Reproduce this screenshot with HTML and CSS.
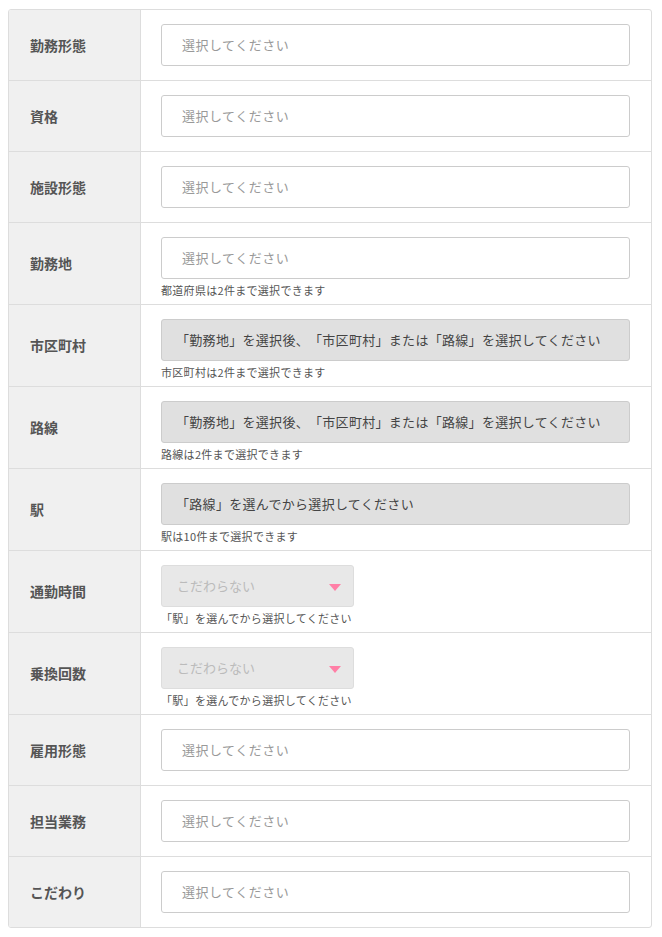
FILE: index.html
```html
<!DOCTYPE html>
<html lang="ja">
<head>
<meta charset="utf-8">
<title>検索条件</title>
<link rel="stylesheet" href="styles.css">
</head>
<body>
<div class="form-table">
  <div class="row">
    <div class="label">勤務形態</div>
    <div class="field"><div class="input">選択してください</div></div>
  </div>
  <div class="row">
    <div class="label">資格</div>
    <div class="field"><div class="input">選択してください</div></div>
  </div>
  <div class="row">
    <div class="label">施設形態</div>
    <div class="field"><div class="input">選択してください</div></div>
  </div>
  <div class="row">
    <div class="label">勤務地</div>
    <div class="field"><div class="input">選択してください</div><p class="note">都道府県は2件まで選択できます</p></div>
  </div>
  <div class="row">
    <div class="label">市区町村</div>
    <div class="field"><div class="input disabled">「勤務地」を選択後、「市区町村」または「路線」を選択してください</div><p class="note">市区町村は2件まで選択できます</p></div>
  </div>
  <div class="row">
    <div class="label">路線</div>
    <div class="field"><div class="input disabled">「勤務地」を選択後、「市区町村」または「路線」を選択してください</div><p class="note">路線は2件まで選択できます</p></div>
  </div>
  <div class="row">
    <div class="label">駅</div>
    <div class="field"><div class="input disabled">「路線」を選んでから選択してください</div><p class="note">駅は10件まで選択できます</p></div>
  </div>
  <div class="row">
    <div class="label">通勤時間</div>
    <div class="field"><div class="select">こだわらない<span class="arrow"></span></div><p class="note">「駅」を選んでから選択してください</p></div>
  </div>
  <div class="row">
    <div class="label">乗換回数</div>
    <div class="field"><div class="select">こだわらない<span class="arrow"></span></div><p class="note">「駅」を選んでから選択してください</p></div>
  </div>
  <div class="row">
    <div class="label">雇用形態</div>
    <div class="field"><div class="input">選択してください</div></div>
  </div>
  <div class="row">
    <div class="label">担当業務</div>
    <div class="field"><div class="input">選択してください</div></div>
  </div>
  <div class="row">
    <div class="label">こだわり</div>
    <div class="field"><div class="input">選択してください</div></div>
  </div>
</div>
</body>
</html>
```

FILE: styles.css
```css
html, body {
  margin: 0;
  padding: 0;
  background: #fff;
}
body {
  padding: 9px 10px 10px 8px;
  font-family: "Noto Sans CJK JP", "Noto Sans", sans-serif;
  color: #555;
  text-spacing-trim: space-all;
}
.form-table {
  width: 644px;
  box-sizing: border-box;
  border: 1px solid #ddd;
  border-radius: 3px;
  overflow: hidden;
}
.row {
  display: grid;
  grid-template-columns: 132px 1fr;
  border-top: 1px solid #ddd;
}
.row:first-child {
  border-top: none;
}
.label {
  background: #f0f0f0;
  border-right: 1px solid #ddd;
  display: flex;
  align-items: center;
  padding: 0 0 1px 21px;
  font-size: 14px;
  font-weight: bold;
  color: #555;
}
.field {
  padding: 14px 21px 14px 20px;
}
.input {
  box-sizing: border-box;
  height: 42px;
  border: 1px solid #ccc;
  border-radius: 3px;
  background: #fff;
  display: flex;
  align-items: center;
  padding: 0 0 1px 20px;
  font-size: 13px;
  letter-spacing: 0.5px;
  color: #999;
  white-space: nowrap;
}
.input.disabled {
  background: #e0e0e0;
  color: #444;
  padding-left: 14px;
  letter-spacing: 0.3px;
}
.note {
  margin: 4px 0 -7px;
  font-size: 11px;
  letter-spacing: 0.3px;
  line-height: 14px;
  color: #555;
  white-space: nowrap;
}
.select {
  box-sizing: border-box;
  width: 193px;
  height: 42px;
  border: 1px solid #ddd;
  border-radius: 3px;
  background: #e8e8e8;
  display: flex;
  align-items: center;
  justify-content: space-between;
  padding: 0 12px 1px 15px;
  font-size: 13px;
  color: #bbb;
}
.arrow {
  width: 0;
  height: 0;
  border-left: 6px solid transparent;
  border-right: 6px solid transparent;
  border-top: 7px solid #ff7fa6;
  margin-top: 3px;
}
```
